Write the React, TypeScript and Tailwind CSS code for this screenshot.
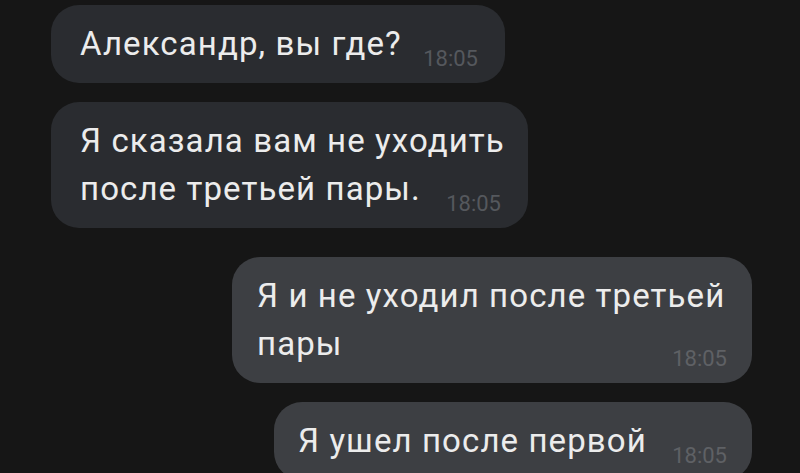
const Time = ({ dark }: { dark?: boolean }) => (
  <span
    className={
      "translate-y-[11px] text-[22px] leading-none tracking-normal " +
      (dark ? "text-[#55585d]" : "text-[#5f6165]")
    }
  >
    18:05
  </span>
);

export default function App() {
  return (
    <div
      className="flex h-[473px] w-[800px] flex-col overflow-hidden whitespace-nowrap bg-[#161616] pt-[5px] text-[33px] leading-[48px] tracking-[1.1px] text-[#ececec]"
      style={{ fontFamily: "Roboto, 'Noto Sans', sans-serif" }}
    >
      {/* incoming */}
      <div className="ml-[51px] w-[454px] rounded-[28px] bg-[#2a2c30] py-[15px] pl-[29px] pr-[27px]">
        <div className="flex items-baseline justify-between">
          <span>Александр, вы где?</span>
          <Time dark />
        </div>
      </div>

      <div className="ml-[51px] mt-[19px] w-[477px] rounded-[28px] bg-[#2a2c30] py-[15px] pl-[29px] pr-[27px]">
        <div>Я сказала вам не уходить</div>
        <div className="flex items-baseline justify-between">
          <span>после третьей пары.</span>
          <Time dark />
        </div>
      </div>

      {/* outgoing */}
      <div className="mr-[48px] mt-[29px] w-[520px] self-end rounded-[28px] bg-[#3d3f43] py-[15px] pl-[25px] pr-[25px]">
        <div>Я и не уходил после третьей</div>
        <div className="flex items-baseline justify-between">
          <span>пары</span>
          <Time />
        </div>
      </div>

      <div className="mr-[48px] mt-[19px] w-[478px] shrink-0 self-end rounded-[28px] bg-[#3d3f43] py-[15px] pl-[24px] pr-[25px]">
        <div className="flex items-baseline justify-between">
          <span>Я ушел после первой</span>
          <Time />
        </div>
      </div>
    </div>
  );
}
